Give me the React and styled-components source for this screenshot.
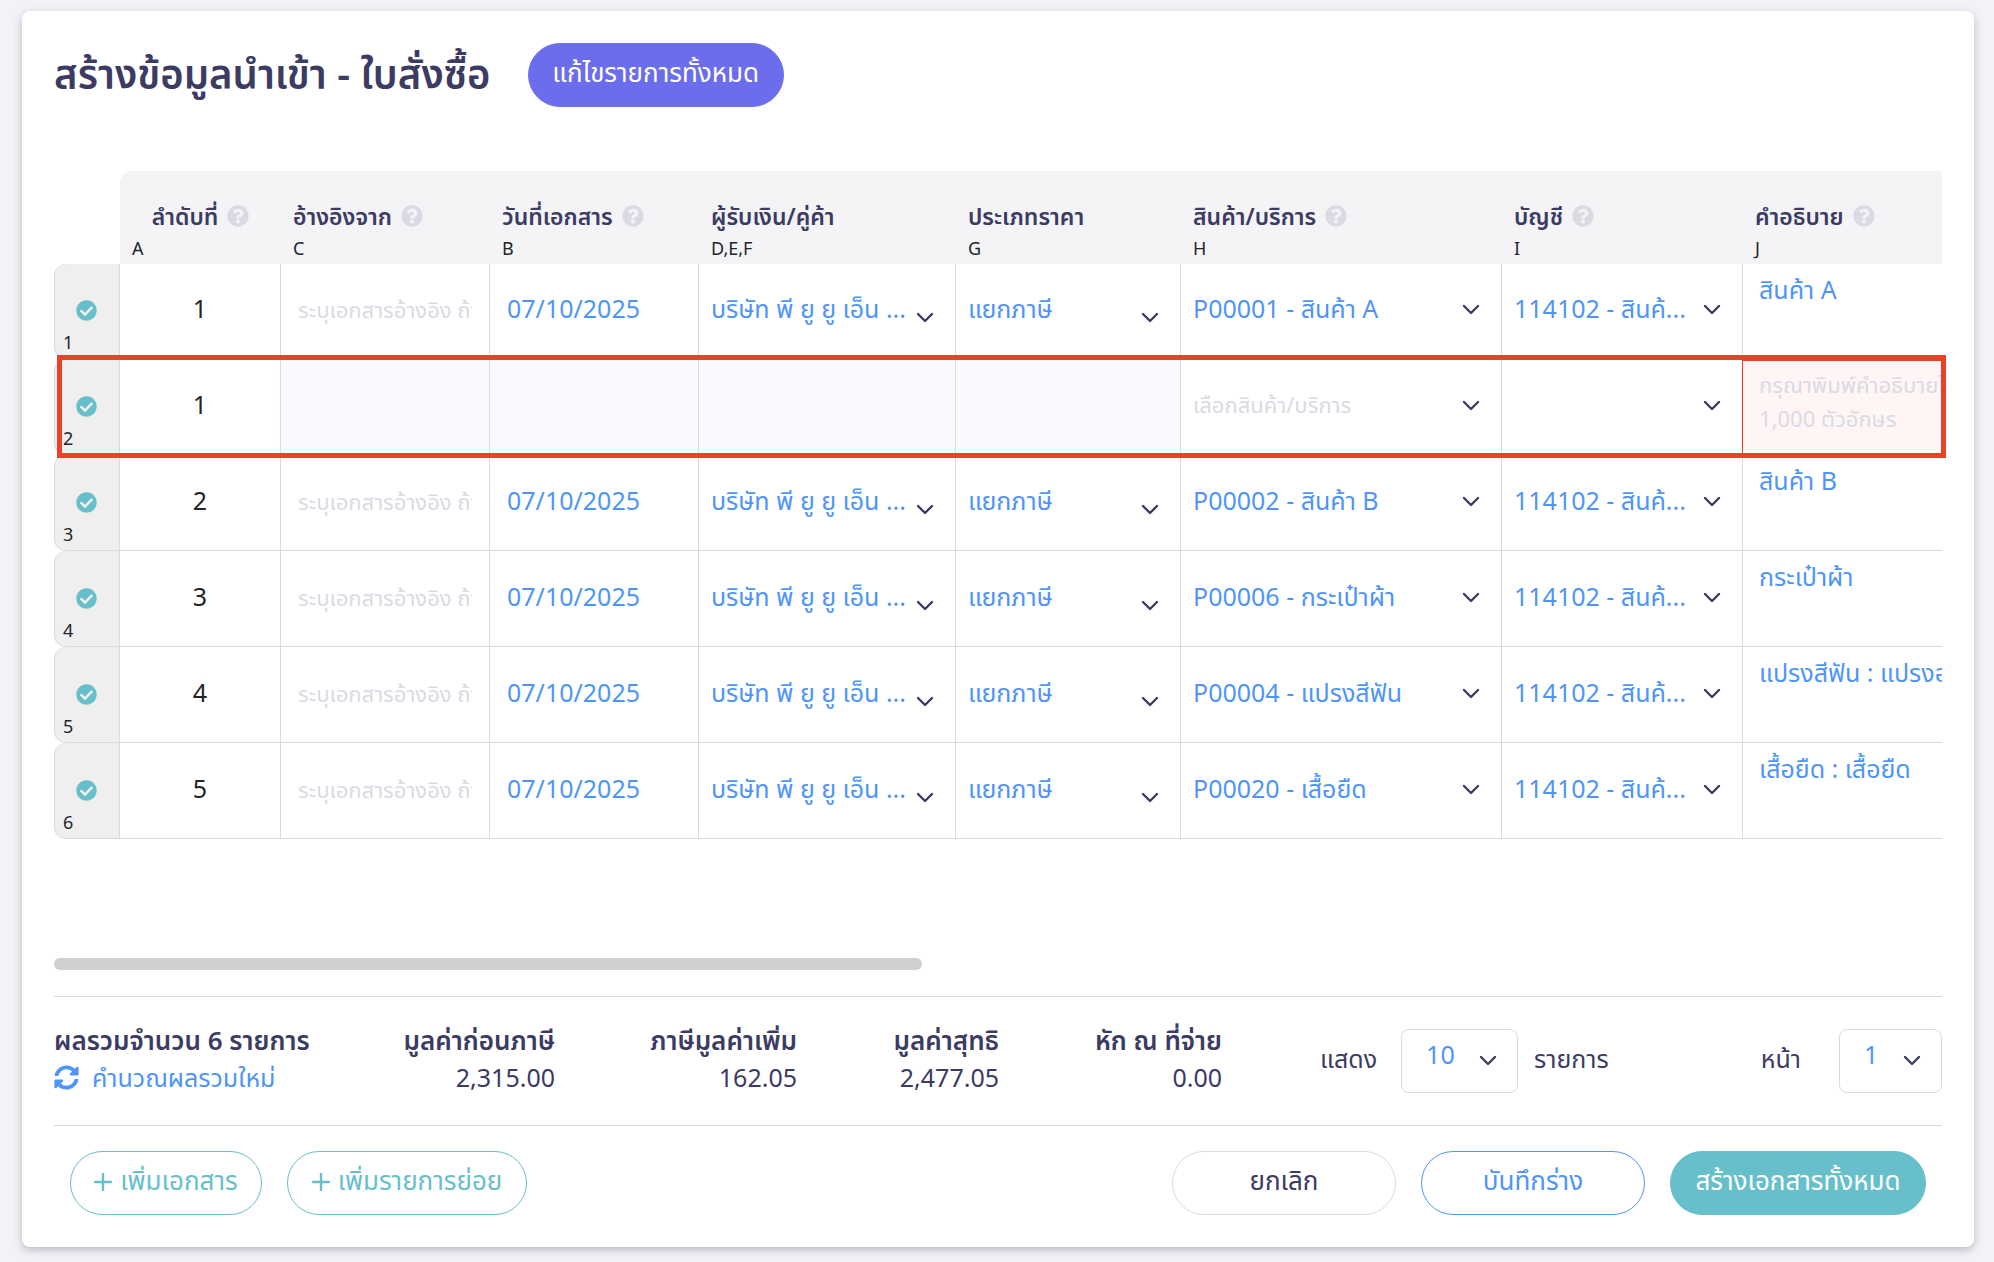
import React from 'react';
import styled, { createGlobalStyle } from 'styled-components';
import { FaCheckCircle, FaQuestionCircle, FaSyncAlt } from 'react-icons/fa';

const colors = {
  navy: '#3b3b64',
  blue: '#4f95f9',
  teal: '#66bfca',
  purple: '#6c6dec',
  line: '#dadae5',
  red: '#ec4126',
};

const GlobalStyle = createGlobalStyle`
  * {
    box-sizing: border-box;
  }

  body {
    margin: 0;
    background: #f2f2f7;
    color: ${colors.navy};
    font-family: 'Noto Sans', 'Noto Sans Thai', sans-serif;
    font-size: 25px;
    font-weight: 400;
    line-height: 36px;
  }

  button, input, select, textarea {
    font: inherit;
    color: inherit;
  }
`;

const Card = styled.main`
  margin: 11px 20px 14px 22px;
  padding: 32px;
  background: #fff;
  border-radius: 8px;
  box-shadow: 0 3px 8px rgba(40, 40, 70, 0.28);
`;

const TitleBar = styled.header`
  display: flex;
  align-items: center;
  gap: 37px;
  margin-bottom: 64px;
`;

const Title = styled.h1`
  margin: 0;
  padding-bottom: 2px;
  font-size: 40px;
  font-weight: 600;
  line-height: 62px;
`;

const Button = styled.button`
  display: inline-flex;
  align-items: center;
  justify-content: center;
  gap: 8px;
  height: 64px;
  min-width: ${props => props.$width}px;
  padding: 0 16px 6px;
  border: 1px solid ${props => props.$border || props.$fill};
  border-radius: 32px;
  background: ${props => props.$fill || '#fff'};
  color: ${props => props.$color || '#fff'};
  font-size: 26px;
  white-space: nowrap;
  cursor: pointer;

  svg {
    margin-top: 4px;
  }
`;

const TableArea = styled.section`
  position: relative;
  height: 787px;
`;

const TableClip = styled.div`
  overflow: hidden;
`;

const Table = styled.table`
  width: 2089px;
  table-layout: fixed;
  border-collapse: separate;
  border-spacing: 0;
`;

const HeadCell = styled.th`
  height: 93px;
  padding: 27px 0 0 12px;
  background: #f4f4f7;
  text-align: left;
  vertical-align: top;
  font-size: 23px;
  font-weight: 600;
  line-height: 36px;
  border-top-left-radius: ${props => (props.$first ? '12px' : '0')};
`;

const HeadBlank = styled.td`
  padding: 0;
`;

const HeadLabel = styled.div`
  display: flex;
  align-items: center;
  justify-content: ${props => (props.$centered ? 'center' : 'flex-start')};
  gap: 9px;
  padding-right: 12px;
  white-space: nowrap;

  svg {
    width: 22px;
    height: 22px;
    color: ${colors.line};
  }
`;

const HeadLetter = styled.div`
  color: #212529;
  font-size: 18px;
  font-weight: 400;
  line-height: 28px;
`;

const Row = styled.tr`
  height: 96px;

  &:first-child {
    height: 95px;
  }
`;

const IndexCell = styled.th`
  padding: 0;
  background: #efefef;
  border: 1px solid ${colors.line};
  border-top: 0;
  border-radius: 12px 0 0 12px;
  color: #212529;
  font-size: 18px;
  font-weight: 400;
`;

const IndexInner = styled.div`
  display: flex;
  flex-direction: column;
  justify-content: space-between;
  height: 94px;
  padding: 36px 0 4px 8px;
  line-height: 24px;
  text-align: left;

  svg {
    width: 21px;
    height: 21px;
    margin-left: 13px;
    color: ${colors.teal};
  }
`;

const Cell = styled.td`
  padding: 0 12px 6px;
  background: ${props => (props.$disabled ? '#f8f9fd' : '#fff')};
  border-right: 1px solid ${colors.line};
  border-bottom: 1px solid ${colors.line};
  color: ${colors.blue};
  overflow: hidden;
`;

const NumberCell = styled(Cell)`
  color: #212529;
  text-align: center;
`;

const TextInput = styled.input`
  display: block;
  width: 100%;
  padding: 0 5px;
  border: 0;
  background: transparent;
  outline: 0;

  &::placeholder {
    color: ${colors.line};
    font-size: 22px;
    opacity: 1;
  }
`;

const SelectBox = styled.div`
  display: grid;
  align-items: center;

  > * {
    grid-area: 1 / 1;
  }

  svg {
    justify-self: end;
    margin-right: 9px;
    margin-top: ${props => (props.$low ? '20px' : '4px')};
    pointer-events: none;
    color: ${colors.navy};
  }
`;

const Select = styled.select`
  appearance: none;
  width: 100%;
  min-width: 0;
  height: 40px;
  padding: 0;
  border: 0;
  background: transparent;
  color: ${props => (props.$empty ? colors.line : colors.blue)};
  font-size: ${props => (props.$empty ? '22px' : 'inherit')};
  outline: 0;
`;

const DescriptionCell = styled(Cell)`
  padding: 0;
  vertical-align: top;
  background: ${props => (props.$invalid ? '#fef5f4' : '#fff')};
  box-shadow: ${props => (props.$invalid ? `-1px 0 0 ${colors.red}, inset 0 2px 0 ${colors.red}` : 'none')};
`;

const Description = styled.textarea`
  display: block;
  width: 100%;
  height: 94px;
  padding: 8px 16px;
  border: 0;
  background: transparent;
  line-height: 34px;
  resize: none;
  outline: 0;
  overflow: hidden;

  &::placeholder {
    color: ${colors.line};
    font-size: 22px;
    opacity: 1;
  }
`;

const RowMarker = styled.div`
  position: absolute;
  top: 184px;
  left: 3px;
  right: -4px;
  height: 103px;
  border: 5px solid ${colors.red};
  pointer-events: none;
`;

const ScrollThumb = styled.div`
  width: 46%;
  height: 12px;
  margin-bottom: 26px;
  border-radius: 6px;
  background: #d0d0d0;
`;

const Summary = styled.section`
  display: grid;
  grid-template-columns: 259fr 242fr 242fr 202fr 223fr 720fr;
  height: 130px;
  border-top: 1px solid ${colors.line};
  border-bottom: 1px solid ${colors.line};
  white-space: nowrap;
`;

const Total = styled.div`
  padding-top: 25px;
  text-align: ${props => (props.$lead ? 'left' : 'right')};
  line-height: 37px;
`;

const TotalLabel = styled.div`
  font-size: 26px;
  font-weight: 600;
`;

const Recalculate = styled.a`
  display: inline-flex;
  align-items: center;
  gap: 13px;
  color: ${colors.blue};
  text-decoration: none;
`;

const Pager = styled.div`
  display: flex;
  align-items: center;
  gap: 16px;
  height: 64px;
  margin-top: 32px;
  padding-left: 98px;
`;

const PagerLabel = styled.label`
  flex: none;
  margin-left: ${props => (props.$push ? 'auto' : '0')};
  margin-right: ${props => props.$gap || 0}px;
  padding-bottom: 6px;
`;

const PagerSelect = styled(SelectBox)`
  width: ${props => props.$width}px;
  height: 64px;
  border: 1px solid ${colors.line};
  border-radius: 8px;

  select {
    height: 62px;
    padding: 0 0 14px 24px;
  }

  svg {
    margin-top: 0;
    margin-right: 20px;
  }
`;

const Actions = styled.footer`
  display: flex;
  gap: 25px;
  padding: 25px 16px 0;
`;

const Spacer = styled.div`
  flex: 1;
`;

const columns = [
  { label: 'ลำดับที่', letter: 'A', help: true, width: 161 },
  { label: 'อ้างอิงจาก', letter: 'C', help: true, width: 209 },
  { label: 'วันที่เอกสาร', letter: 'B', help: true, width: 209 },
  { label: 'ผู้รับเงิน/คู่ค้า', letter: 'D,E,F', width: 257 },
  { label: 'ประเภทราคา', letter: 'G', width: 225 },
  { label: 'สินค้า/บริการ', letter: 'H', help: true, width: 321 },
  { label: 'บัญชี', letter: 'I', help: true, width: 241 },
  { label: 'คำอธิบาย', letter: 'J', help: true, width: 400 },
];

const rows = [
  { no: 1, product: 'P00001 - สินค้า A', description: 'สินค้า A' },
  { no: 1, sub: true },
  { no: 2, product: 'P00002 - สินค้า B', description: 'สินค้า B' },
  { no: 3, product: 'P00006 - กระเป๋าผ้า', description: 'กระเป๋าผ้า' },
  { no: 4, product: 'P00004 - แปรงสีฟัน', description: 'แปรงสีฟัน : แปรงอเนกประสงค์' },
  { no: 5, product: 'P00020 - เสื้อยืด', description: 'เสื้อยืด : เสื้อยืด' },
];

const totals = [
  { label: 'มูลค่าก่อนภาษี', value: '2,315.00' },
  { label: 'ภาษีมูลค่าเพิ่ม', value: '162.05' },
  { label: 'มูลค่าสุทธิ', value: '2,477.05' },
  { label: 'หัก ณ ที่จ่าย', value: '0.00' },
];

const Chevron = () => (
  <svg width="18" height="12" viewBox="0 0 18 12" fill="none" aria-hidden="true">
    <path d="M2 2l7 7 7-7" stroke="currentColor" strokeWidth="2.4" strokeLinecap="round" strokeLinejoin="round" />
  </svg>
);

const Plus = () => (
  <svg width="18" height="18" viewBox="0 0 18 18" fill="none" aria-hidden="true">
    <path d="M9 1v16M1 9h16" stroke="currentColor" strokeWidth="2.4" strokeLinecap="round" />
  </svg>
);

const Dropdown = ({ label, value, empty, low }) => (
  <SelectBox $low={low}>
    <Select aria-label={label} $empty={empty} defaultValue={value}>
      <option value={value}>{value}</option>
    </Select>
    <Chevron />
  </SelectBox>
);

const ImportRow = ({ row, index }) => (
  <Row>
    <IndexCell scope="row">
      <IndexInner>
        <FaCheckCircle />
        <span>{index + 1}</span>
      </IndexInner>
    </IndexCell>
    <NumberCell>{row.no}</NumberCell>
    {row.sub ? (
      <>
        <Cell $disabled />
        <Cell $disabled />
        <Cell $disabled />
        <Cell $disabled />
      </>
    ) : (
      <>
        <Cell><TextInput aria-label="อ้างอิงจาก" placeholder="ระบุเอกสารอ้างอิง ถ้ามี" /></Cell>
        <Cell><TextInput aria-label="วันที่เอกสาร" defaultValue="07/10/2025" /></Cell>
        <Cell><Dropdown label="ผู้รับเงิน/คู่ค้า" value="บริษัท พี ยู ยู เอ็น ..." low /></Cell>
        <Cell><Dropdown label="ประเภทราคา" value="แยกภาษี" low /></Cell>
      </>
    )}
    <Cell>
      <Dropdown label="สินค้า/บริการ" value={row.product || 'เลือกสินค้า/บริการ'} empty={row.sub} />
    </Cell>
    <Cell>
      <Dropdown label="บัญชี" value={row.sub ? '' : '114102 - สินค้...'} />
    </Cell>
    <DescriptionCell $invalid={row.sub}>
      <Description
        aria-label="คำอธิบาย"
        defaultValue={row.description}
        placeholder={'กรุณาพิมพ์คำอธิบายไม่เกิน\n1,000 ตัวอักษร'}
      />
    </DescriptionCell>
  </Row>
);

const App = () => (
  <>
    <GlobalStyle />
    <Card>
      <TitleBar>
        <Title>สร้างข้อมูลนำเข้า - ใบสั่งซื้อ</Title>
        <Button $width={256} $fill={colors.purple}>แก้ไขรายการทั้งหมด</Button>
      </TitleBar>

      <TableArea>
        <TableClip>
          <Table>
            <colgroup>
              <col width="66" />
              {columns.map(column => <col key={column.letter} width={column.width} />)}
            </colgroup>
            <thead>
              <tr>
                <HeadBlank />
                {columns.map((column, i) => (
                  <HeadCell key={column.letter} $first={i === 0}>
                    <HeadLabel $centered={i === 0}>
                      {column.label}
                      {column.help && <FaQuestionCircle />}
                    </HeadLabel>
                    <HeadLetter>{column.letter}</HeadLetter>
                  </HeadCell>
                ))}
              </tr>
            </thead>
            <tbody>
              {rows.map((row, i) => <ImportRow key={i} row={row} index={i} />)}
            </tbody>
          </Table>
        </TableClip>
        <RowMarker />
      </TableArea>

      <ScrollThumb />

      <Summary>
        <Total $lead>
          <TotalLabel>ผลรวมจำนวน 6 รายการ</TotalLabel>
          <Recalculate href="#recalculate">
            <FaSyncAlt />
            คำนวณผลรวมใหม่
          </Recalculate>
        </Total>
        {totals.map(total => (
          <Total key={total.label}>
            <TotalLabel>{total.label}</TotalLabel>
            {total.value}
          </Total>
        ))}
        <Pager>
          <PagerLabel htmlFor="page-size" $gap={8}>แสดง</PagerLabel>
          <PagerSelect $width={117}>
            <Select id="page-size" defaultValue="10">
              <option>10</option>
            </Select>
            <Chevron />
          </PagerSelect>
          <PagerLabel htmlFor="page-size">รายการ</PagerLabel>
          <PagerLabel htmlFor="page" $push $gap={22}>หน้า</PagerLabel>
          <PagerSelect $width={103}>
            <Select id="page" defaultValue="1">
              <option>1</option>
            </Select>
            <Chevron />
          </PagerSelect>
        </Pager>
      </Summary>

      <Actions>
        <Button $width={192} $border={colors.teal} $color={colors.teal}><Plus />เพิ่มเอกสาร</Button>
        <Button $width={240} $border={colors.teal} $color={colors.teal}><Plus />เพิ่มรายการย่อย</Button>
        <Spacer />
        <Button $width={224} $border={colors.line} $color={colors.navy}>ยกเลิก</Button>
        <Button $width={224} $border={colors.blue} $color={colors.blue}>บันทึกร่าง</Button>
        <Button $width={256} $fill={colors.teal}>สร้างเอกสารทั้งหมด</Button>
      </Actions>
    </Card>
  </>
);

export default App;
